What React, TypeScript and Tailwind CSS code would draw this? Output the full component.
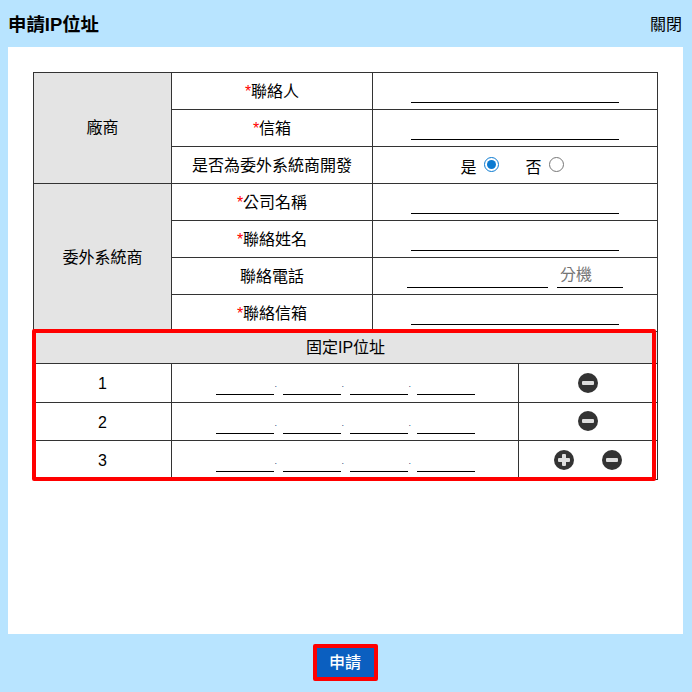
const cell = 'border border-[#333] text-center align-middle p-0';
const labelCell = `${cell} pt-[2px]`;
const field = 'border-0 border-b border-black bg-transparent outline-none';

function Required({ label }: { label: string }) {
  return (
    <>
      <span className="text-[#f00]">*</span>
      {label}
    </>
  );
}

function TextInput() {
  return <input type="text" className={`${field} mt-[4px] block mx-auto w-[208px] h-[20px]`} />;
}

function RoundIcon({ plus }: { plus?: boolean }) {
  return (
    <svg width="20" height="20" viewBox="0 0 20 20" className="block">
      <circle cx="10" cy="10" r="10" fill="#333" />
      <rect x="4" y="8" width="12" height="4" rx="1" fill="#ddd" />
      {plus && <rect x="8" y="4" width="4" height="12" rx="1" fill="#ddd" />}
    </svg>
  );
}

function IpInputs() {
  return (
    <div className="flex justify-center items-end mt-[4px]">
      {[0, 1, 2, 3].map((i) => (
        <div key={i} className="flex items-end">
          {i > 0 && <span className="mb-[5px] w-[9px] pl-[1px] text-left text-[9px] leading-[12px] text-[#1a4a80]">.</span>}
          <input type="text" className={`${field} w-[58px] h-[20px]`} />
        </div>
      ))}
    </div>
  );
}

export default function App() {
  return (
    <div className="flex h-[692px] w-[692px] flex-col bg-[#b8e4ff] font-['Liberation_Sans','Noto_Sans_CJK_TC',sans-serif] text-[16px] text-black">
      <header className="flex h-[47px] items-center justify-between pl-[8px] pr-[10px] pt-[3px]">
        <h1 className="text-[18.4px] font-bold">申請IP位址</h1>
        <button className="text-[16px]">關閉</button>
      </header>

      <main className="ml-[8px] mr-[9px] h-[587px] bg-white pl-[25px] pt-[25px]">
        <div className="relative w-[624px]">
          <table className="w-[624px] table-fixed border-collapse">
            <colgroup>
              <col className="w-[138px]" />
              <col className="w-[201px]" />
              <col className="w-[146px]" />
              <col className="w-[139px]" />
            </colgroup>
            <tbody>
              <tr className="h-[37px]">
                <td rowSpan={3} className={`${cell} bg-[#e4e4e4]`}>廠商</td>
                <td className={labelCell}><Required label="聯絡人" /></td>
                <td colSpan={2} className={cell}><TextInput /></td>
              </tr>
              <tr className="h-[37px]">
                <td className={labelCell}><Required label="信箱" /></td>
                <td colSpan={2} className={cell}><TextInput /></td>
              </tr>
              <tr className="h-[37px]">
                <td className={labelCell}>是否為委外系統商開發</td>
                <td colSpan={2} className={labelCell}>
                  <div className="flex items-center justify-center pr-[6px]">
                    <span className="mt-[3px]">是</span>
                    <input type="radio" name="outsourced" defaultChecked className="ml-[7px] mb-[3px] size-[15px] accent-[#0b7ad1]" />
                    <span className="ml-[27px] mt-[3px]">否</span>
                    <input type="radio" name="outsourced" className="ml-[7px] mb-[3px] size-[15px]" />
                  </div>
                </td>
              </tr>
              <tr className="h-[37px]">
                <td rowSpan={4} className={`${cell} bg-[#e4e4e4]`}>委外系統商</td>
                <td className={labelCell}><Required label="公司名稱" /></td>
                <td colSpan={2} className={cell}><TextInput /></td>
              </tr>
              <tr className="h-[37px]">
                <td className={labelCell}><Required label="聯絡姓名" /></td>
                <td colSpan={2} className={cell}><TextInput /></td>
              </tr>
              <tr className="h-[37px]">
                <td className={labelCell}>聯絡電話</td>
                <td colSpan={2} className={cell}>
                  <div className="mt-[4px] flex justify-center gap-[9px]">
                    <input type="text" className={`${field} w-[141px] h-[20px]`} />
                    <input
                      type="text"
                      placeholder="分機"
                      className={`${field} w-[66px] h-[22px] -mt-[2px] pb-[3px] pl-[3px] placeholder:text-[#757575]`}
                    />
                  </div>
                </td>
              </tr>
              <tr className="h-[37px]">
                <td className={labelCell}><Required label="聯絡信箱" /></td>
                <td colSpan={2} className={cell}><TextInput /></td>
              </tr>
              <tr className="h-[32px]">
                <td colSpan={4} className={`${cell} bg-[#e4e4e4]`}>固定IP位址</td>
              </tr>
              <tr className="h-[39px]">
                <td className={labelCell}>1</td>
                <td colSpan={2} className={cell}><IpInputs /></td>
                <td className={cell}><div className="flex justify-center pb-[1px]"><RoundIcon /></div></td>
              </tr>
              <tr className="h-[38px]">
                <td className={labelCell}>2</td>
                <td colSpan={2} className={cell}><IpInputs /></td>
                <td className={cell}><div className="flex justify-center pb-[1px]"><RoundIcon /></div></td>
              </tr>
              <tr className="h-[39px]">
                <td className={labelCell}>3</td>
                <td colSpan={2} className={cell}><IpInputs /></td>
                <td className={cell}>
                  <div className="flex justify-center gap-[28px] pb-[1px]">
                    <RoundIcon plus />
                    <RoundIcon />
                  </div>
                </td>
              </tr>
            </tbody>
          </table>
          {/* highlight drawn over the IP section */}
          <div className="pointer-events-none absolute left-[-1px] top-[257px] h-[152px] w-[624px] rounded-[2px] border-[4px] border-[#f00]" />
        </div>
      </main>

      <footer className="flex flex-1 items-start justify-center pt-[10px]">
        <button className="mr-[2px] h-[37px] w-[65px] rounded-[2px] border-[4px] border-[#f00] bg-[#0b5fc0] text-[16px] font-medium text-white">
          申請
        </button>
      </footer>
    </div>
  );
}
